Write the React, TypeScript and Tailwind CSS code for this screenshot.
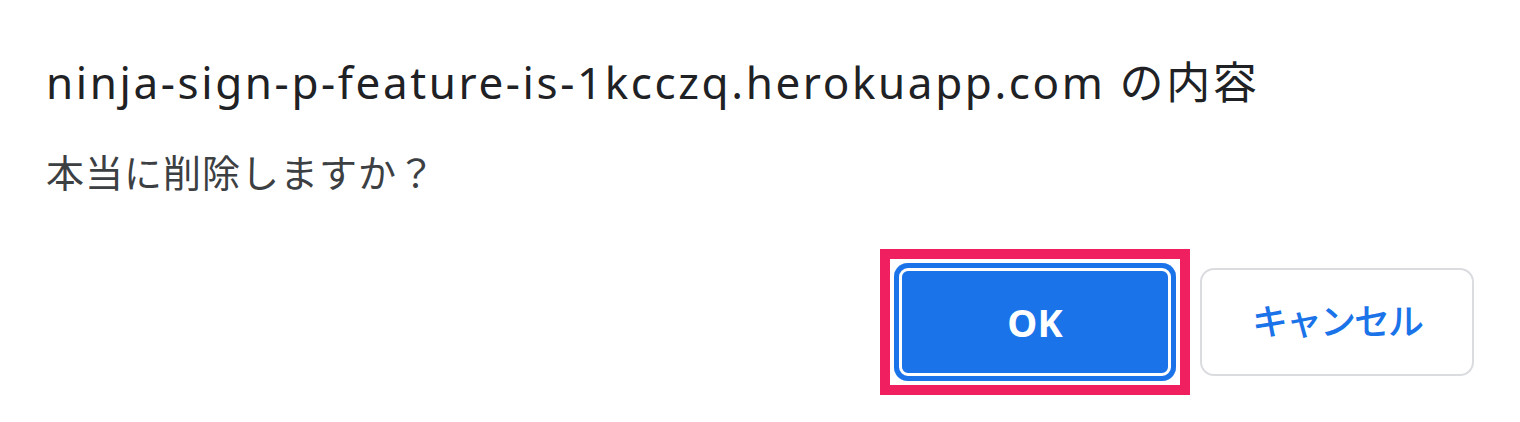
export default function App() {
  return (
    <div
      className="w-[1520px] h-[422px] bg-white overflow-hidden flex flex-col"
      style={{ fontFamily: '"Noto Sans", "Noto Sans CJK JP", sans-serif' }}
    >
      {/* Title */}
      <div className="pl-[46px] pt-[58px] text-[44px] leading-[48px] tracking-[2.6px] text-[#202124] whitespace-nowrap">
        ninja-sign-p-feature-is-1kcczq.herokuapp.com の内容
      </div>

      {/* Message */}
      <div className="pl-[46px] mt-[44px] text-[38px] leading-[44px] tracking-[1px] text-[#3c4043] whitespace-nowrap">
        本当に削除しますか？
      </div>

      {/* Buttons */}
      <div className="mt-auto mb-[27px] pr-[46px] flex justify-end items-center gap-[10px]">
        <div className="border-[10px] border-[#f01f5f] p-[4px]">
          <button className="w-[282px] h-[118px] rounded-[14px] bg-[#1a73e8] text-white text-[38px] font-bold shadow-[inset_0_0_0_5px_#1a73e8,inset_0_0_0_8px_#ffffff]">
            OK
          </button>
        </div>
        <button className="w-[274px] h-[108px] rounded-[14px] border-2 border-[#dadce0] bg-white text-[#1a73e8] text-[36px] tracking-[-2px] font-medium">
          キャンセル
        </button>
      </div>
    </div>
  );
}
